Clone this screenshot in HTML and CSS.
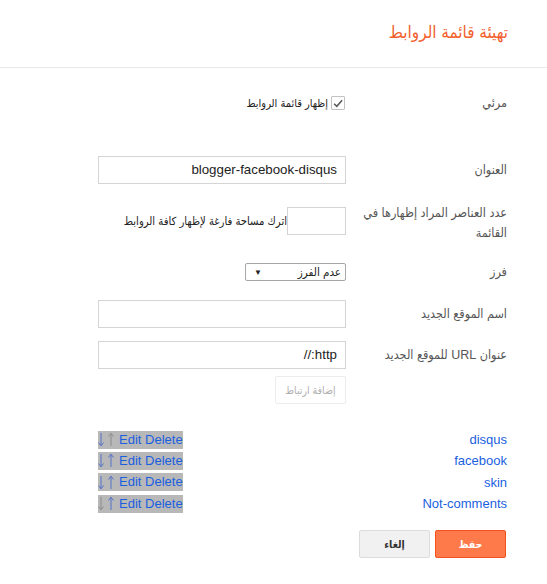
FILE: index.html
```html
<!DOCTYPE html>
<html lang="ar" dir="rtl">
<head>
<meta charset="utf-8">
<title>تهيئة قائمة الروابط</title>
<link rel="stylesheet" href="styles.css">
</head>
<body>
<div class="header"><h1 class="title">تهيئة قائمة الروابط</h1></div>
<div class="form">
  <div class="row row-visible">
    <div class="label">مرئي</div>
    <div class="control">
      <label class="check">
        <span class="box"><svg width="14" height="14" viewBox="0 0 14 14"><path d="M2.5 7.2 L5.6 10.3 L11.8 3.2" fill="none" stroke="#5a5a5a" stroke-width="1.8"/></svg></span>
        <span class="check-text">إظهار قائمة الروابط</span>
      </label>
    </div>
  </div>
  <div class="row row-title">
    <div class="label">العنوان</div>
    <div class="control"><div class="input">blogger-facebook-disqus</div></div>
  </div>
  <div class="row row-count">
    <div class="label">عدد العناصر المراد إظهارها في القائمة</div>
    <div class="control count-control">
      <div class="input small"></div>
      <span class="hint">اترك مساحة فارغة لإظهار كافة الروابط</span>
    </div>
  </div>
  <div class="row row-sort">
    <div class="label">فرز</div>
    <div class="control"><div class="select"><span>عدم الفرز</span><span class="arrow">▼</span></div></div>
  </div>
  <div class="row row-name">
    <div class="label">اسم الموقع الجديد</div>
    <div class="control"><div class="input"></div></div>
  </div>
  <div class="row row-url">
    <div class="label">عنوان URL للموقع الجديد</div>
    <div class="control"><div class="input"><bdi dir="rtl">http://</bdi></div></div>
  </div>
  <div class="row row-add">
    <div class="label"></div>
    <div class="control"><div class="btn-add">إضافة ارتباط</div></div>
  </div>

  <div class="links">
    <div class="link-row"><a class="name" href="#">disqus</a><span class="tools" dir="ltr"><svg class="arr" width="6" height="15" viewBox="0 0 6 15"><path d="M3 1 V13.5 M0.5 10.5 L3 13.8 L5.5 10.5" fill="none" stroke="#5470c8" stroke-width="1"/></svg><svg class="arr" width="6" height="15" viewBox="0 0 6 15"><path d="M3 14 V1.5 M0.5 4.5 L3 1.2 L5.5 4.5" fill="none" stroke="#8c8c8c" stroke-width="1"/></svg><span class="acts"><a href="#">Edit</a> <a href="#">Delete</a></span></span></div>
    <div class="link-row"><a class="name" href="#">facebook</a><span class="tools" dir="ltr"><svg class="arr" width="6" height="15" viewBox="0 0 6 15"><path d="M3 1 V13.5 M0.5 10.5 L3 13.8 L5.5 10.5" fill="none" stroke="#5470c8" stroke-width="1"/></svg><svg class="arr" width="6" height="15" viewBox="0 0 6 15"><path d="M3 14 V1.5 M0.5 4.5 L3 1.2 L5.5 4.5" fill="none" stroke="#5470c8" stroke-width="1"/></svg><span class="acts"><a href="#">Edit</a> <a href="#">Delete</a></span></span></div>
    <div class="link-row"><a class="name" href="#">skin</a><span class="tools" dir="ltr"><svg class="arr" width="6" height="15" viewBox="0 0 6 15"><path d="M3 1 V13.5 M0.5 10.5 L3 13.8 L5.5 10.5" fill="none" stroke="#5470c8" stroke-width="1"/></svg><svg class="arr" width="6" height="15" viewBox="0 0 6 15"><path d="M3 14 V1.5 M0.5 4.5 L3 1.2 L5.5 4.5" fill="none" stroke="#5470c8" stroke-width="1"/></svg><span class="acts"><a href="#">Edit</a> <a href="#">Delete</a></span></span></div>
    <div class="link-row"><a class="name" href="#">Not-comments</a><span class="tools" dir="ltr"><svg class="arr" width="6" height="15" viewBox="0 0 6 15"><path d="M3 1 V13.5 M0.5 10.5 L3 13.8 L5.5 10.5" fill="none" stroke="#8c8c8c" stroke-width="1"/></svg><svg class="arr" width="6" height="15" viewBox="0 0 6 15"><path d="M3 14 V1.5 M0.5 4.5 L3 1.2 L5.5 4.5" fill="none" stroke="#5470c8" stroke-width="1"/></svg><span class="acts"><a href="#">Edit</a> <a href="#">Delete</a></span></span></div>
  </div>

  <div class="actions">
    <div class="btn btn-save">حفظ</div>
    <div class="btn btn-cancel">إلغاء</div>
  </div>
</div>
</body>
</html>
```
FILE: styles.css
```css
html, body {
  margin: 0;
  padding: 0;
  background: #fff;
}
body {
  font-family: "Liberation Sans", "DejaVu Sans Condensed", "DejaVu Sans", sans-serif;
  font-stretch: condensed;
  color: #555;
  font-size: 13px;
  width: 547px;
  height: 584px;
  overflow: hidden;
}
.header {
  height: 67px;
  border-bottom: 1px solid #e8e8e8;
  padding-right: 39px;
}
.title {
  margin: 0;
  padding-top: 21px;
  font-size: 17px;
  font-weight: normal;
  line-height: 24px;
  color: #f2602d;
}
.form {
  padding: 0 40px 0 98px;
}
.row {
  display: grid;
  grid-template-columns: 150px 248px;
  column-gap: 11px;
  align-items: center;
}
.label {
  line-height: 20px;
  color: #555;
  font-size: 12.5px;
}
.control {
  display: flex;
  align-items: center;
}
.row-visible { margin-top: 25px; height: 20px; }
.row-title { margin-top: 43px; }
.row-count { margin-top: 19px; align-items: start; }
.row-count .control { margin-top: 4px; }
.row-sort { margin-top: 19px; height: 20px; }
.row-name { margin-top: 18px; }
.row-url { margin-top: 13px; }
.row-add { margin-top: 7px; }

.check {
  display: flex;
  align-items: center;
  gap: 3px;
  color: #222;
  font-size: 11px;
}
.box {
  width: 12px;
  height: 12px;
  border: 1px solid #c2c2c2;
  border-radius: 1px;
  display: flex;
  align-items: center;
  justify-content: center;
  margin-right: 1px;
}
.box svg { width: 13px; height: 13px; }

.input {
  box-sizing: border-box;
  width: 248px;
  height: 28px;
  border: 1px solid #d4d4d4;
  font-size: 13.3px;
  color: #222;
  line-height: 26px;
  padding: 0 8px;
  text-align: right;
}
.input.small { width: 59px; flex: none; }
.hint {
  font-size: 11.2px;
  color: #222;
  white-space: nowrap;
}
.select {
  box-sizing: border-box;
  width: 101px;
  height: 18px;
  border: 1px solid #a6a6a6;
  border-radius: 2px;
  display: flex;
  justify-content: space-between;
  align-items: center;
  padding: 0 4px 0 8px;
  font-size: 11.5px;
  color: #222;
}
.select .arrow { font-size: 8px; }

.btn-add {
  box-sizing: border-box;
  width: 71px;
  height: 28px;
  border: 1px solid #ececec;
  border-radius: 2px;
  display: flex;
  align-items: center;
  justify-content: center;
  font-size: 10.5px;
  color: #b0b0b0;
}

.links {
  margin-top: 25px;
}
.link-row {
  display: flex;
  justify-content: space-between;
  align-items: center;
  height: 21.3px;
  width: 409px;
}
.link-row a { color: #1a5fe0; text-decoration: none; }
.name { font-size: 13px; font-family: "Liberation Sans", Arial, sans-serif; }
.tools {
  font-family: "Liberation Sans", Arial, sans-serif;
  font-size: 13px;
  background: #b8b8b8;
  height: 18px;
  line-height: 18px;
  white-space: nowrap;
  display: flex;
  align-items: center;
  gap: 4px;
}
.tools .acts { margin-left: 1px; }
.tools .arr { flex: none; }

.actions {
  margin-top: 16px;
  display: flex;
  gap: 5px;
  margin-right: 1px;
}
.btn {
  box-sizing: border-box;
  width: 71px;
  height: 28px;
  border-radius: 2px;
  display: flex;
  align-items: center;
  justify-content: center;
  font-size: 10.5px;
  font-weight: bold;
}
.btn-save {
  background: #ff7a4a;
  border: 1px solid #f4511e;
  color: #fff;
}
.btn-cancel {
  background: #f1f1f1;
  border: 1px solid #dcdcdc;
  color: #333;
}
```
